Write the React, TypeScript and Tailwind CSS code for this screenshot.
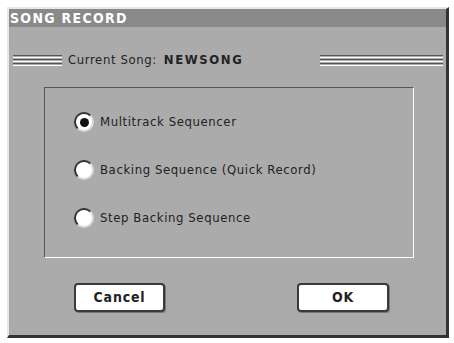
const font = { fontFamily: '"DejaVu Sans Condensed", "DejaVu Sans", sans-serif' };

function Grooves({ className }: { className: string }) {
  return (
    <div className={`flex flex-col gap-px ${className}`}>
      <div className="h-px bg-[#555]" />
      <div className="h-px bg-white" />
      <div className="h-px bg-[#555]" />
      <div className="h-px bg-white" />
      <div className="h-px bg-[#555]" />
      <div className="h-px bg-white" />
    </div>
  );
}

function Radio({ label, checked }: { label: string; checked?: boolean }) {
  return (
    <div className="flex h-[20px] items-center gap-[6px]">
      <div className="flex h-[20px] w-[20px] shrink-0 items-center justify-center rounded-full border-2 border-t-[#333] border-l-[#333] border-b-[#d8d8d8] border-r-[#d8d8d8] bg-white">
        {checked && <div className="h-[9px] w-[9px] rounded-full bg-[#111]" />}
      </div>
      <span className="text-[13px] leading-[20px] tracking-[0.6px] text-[#222]">{label}</span>
    </div>
  );
}

function Button({ label }: { label: string }) {
  return (
    <button className="flex h-[29px] w-full items-center justify-center rounded-[4px] border-2 border-[#3a3a3a] bg-white text-[14px] font-bold tracking-[0.8px] text-[#222] shadow-[1px_1px_0_#777]">
      {label}
    </button>
  );
}

export default function App() {
  return (
    <div className="h-[343px] w-[454px] bg-white pl-[7px] pt-[7px]" style={font}>
      <div className="flex h-[331px] w-[442px] flex-col border-t-2 border-l-2 border-r-[3px] border-b-[3px] border-t-[#e8e8e8] border-l-[#e8e8e8] border-r-[#333] border-b-[#333] bg-[#ababab]">
        {/* Title bar */}
        <div className="flex h-[18px] shrink-0 items-center bg-[#898989] pl-[1px]">
          <span className="text-[14px] font-bold leading-[18px] tracking-[1.3px] text-white">SONG RECORD</span>
        </div>

        {/* Current song */}
        <div className="mt-[26px] flex h-[14px] shrink-0 items-center pl-[4px] pr-[3px]">
          <Grooves className="w-[49px]" />
          <span className="ml-[6px] text-[13px] leading-[14px] tracking-[0.6px] text-[#222]">Current Song:</span>
          <span className="ml-[7px] text-[13px] font-bold leading-[14px] tracking-[1.6px] text-[#222]">NEWSONG</span>
          <div className="flex-1" />
          <Grooves className="w-[123px]" />
        </div>

        {/* Options box */}
        <div className="ml-[35px] mr-[32px] mt-[20px] flex h-[171px] shrink-0 flex-col gap-[28px] border border-t-[#555] border-l-[#555] border-b-white border-r-white pl-[29px] pt-[24px]">
          <Radio label="Multitrack Sequencer" checked />
          <Radio label="Backing Sequence (Quick Record)" />
          <Radio label="Step Backing Sequence" />
        </div>

        {/* Buttons */}
        <div className="mt-[25px] flex shrink-0 pl-[65px]">
          <div className="w-[91px]">
            <Button label="Cancel" />
          </div>
          <div className="ml-[132px] w-[92px]">
            <Button label="OK" />
          </div>
        </div>
      </div>
    </div>
  );
}
